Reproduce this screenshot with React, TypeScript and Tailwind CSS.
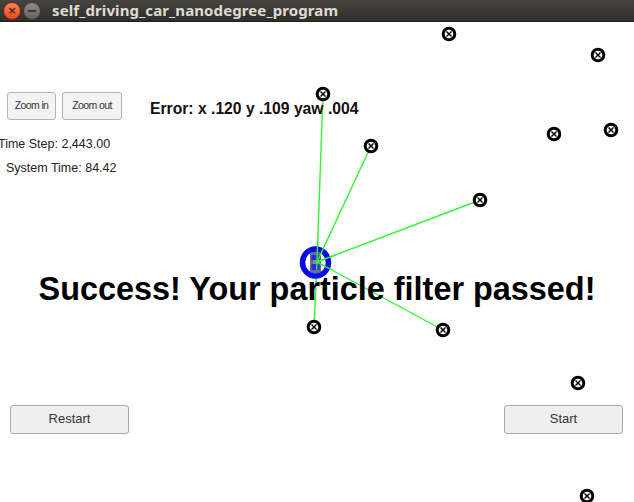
import React from "react";

const landmarks: [number, number][] = [
  [449, 34],
  [598, 55],
  [323, 94],
  [371, 146],
  [554, 134],
  [611, 130],
  [480, 200],
  [314, 327],
  [443, 330],
  [578, 383],
  [587, 496],
];

const linked: [number, number][] = [
  [323, 94],
  [371, 146],
  [480, 200],
  [314, 327],
  [443, 330],
];

const CAR: [number, number] = [317, 262];

function Marker({ x, y }: { x: number; y: number }) {
  return (
    <g>
      <circle cx={x} cy={y} r={5.8} fill="white" stroke="black" strokeWidth={3} />
      <line x1={x - 2.5} y1={y - 2.5} x2={x + 2.5} y2={y + 2.5} stroke="black" strokeWidth={1.4} />
      <line x1={x - 2.5} y1={y + 2.5} x2={x + 2.5} y2={y - 2.5} stroke="black" strokeWidth={1.4} />
    </g>
  );
}

export default function App() {
  const canvasTop = 22;
  return (
    <div className="w-[634px] h-[502px] overflow-hidden bg-white flex flex-col" style={{ fontFamily: '"Liberation Sans", Arial, sans-serif' }}>
      {/* Title bar */}
      <div className="h-[22px] shrink-0 flex items-center bg-gradient-to-b from-[#45443f] to-[#2f2e2b] border-b border-[#1e1e1c]">
        <div className="ml-[3px] w-[18px] h-[18px] rounded-full bg-gradient-to-b from-[#f6845a] to-[#e0491c] border border-[#7a2a10] flex items-center justify-center">
          <span className="text-[11px] leading-none text-[#5a1e08] font-bold" style={{ fontFamily: '"DejaVu Sans", sans-serif' }}>×</span>
        </div>
        <div className="ml-[2px] w-[18px] h-[18px] rounded-full bg-gradient-to-b from-[#8f8d88] to-[#64625d] border border-[#3a3935] flex items-center justify-center">
          <div className="w-[8px] h-[2px] bg-[#3b3a36]" />
        </div>
        <div className="ml-[11px] text-[15px] font-bold text-[#dfdbd2] tracking-[0.1px]" style={{ fontFamily: '"Noto Sans", "DejaVu Sans", sans-serif' }}>
          self_driving_car_nanodegree_program
        </div>
      </div>

      {/* Canvas */}
      <div className="relative flex-1 flex flex-col">
        <svg className="absolute inset-0" width={634} height={480} viewBox={`0 ${canvasTop} 634 480`}>
          {linked.map(([x, y], i) => (
            <line key={i} x1={CAR[0]} y1={CAR[1]} x2={x} y2={y} stroke="#33f533" strokeWidth={1.4} />
          ))}
          {/* car */}
          <ellipse cx={315.5} cy={262.5} rx={13} ry={13.5} fill="none" stroke="#0a0ae6" strokeWidth={5.5} />
          <rect x={310} y={252} width={11} height={21} rx={2} fill="#5c6a9c" />
          <rect x={311.5} y={255} width={8} height={5} fill="#2a2ad6" />
          <rect x={311.5} y={264} width={8} height={6} fill="#2a2ad6" />
          <rect x={313} y={260} width={5} height={4} fill="#8a8f98" />
          {linked.map(([x, y], i) => (
            <line key={"o" + i} x1={CAR[0]} y1={CAR[1]} x2={CAR[0] + (x - CAR[0]) * 0.12} y2={CAR[1] + (y - CAR[1]) * 0.12} stroke="#33f533" strokeWidth={1.4} />
          ))}
          {landmarks.map(([x, y], i) => (
            <Marker key={i} x={x} y={y} />
          ))}
        </svg>

        <div className="relative flex items-center pt-[70px] pl-[7px]">
          <button className="h-[28px] w-[49px] rounded-[3px] border border-[#b4b4b4] bg-[#f3f3f3] text-[10.5px] text-[#333] tracking-[-0.6px]">
            Zoom in
          </button>
          <button className="ml-[6px] h-[28px] w-[60px] rounded-[3px] border border-[#b4b4b4] bg-[#f3f3f3] text-[10.5px] text-[#333] tracking-[-0.6px]">
            Zoom out
          </button>
          <div className="ml-[28px] mt-[5px] text-[15.7px] font-bold text-[#111]">Error: x .120 y .109 yaw .004</div>
        </div>

        <div className="relative ml-[-2px] mt-[15px] text-[12.5px] text-[#222] leading-[16px]">Time Step: 2,443.00</div>
        <div className="relative ml-[6px] mt-[8px] text-[12.5px] text-[#222] leading-[16px]">System Time: 84.42</div>

        <div className="relative mt-[95px] text-center text-[32.4px] font-bold text-black leading-[36px]">
          Success! Your particle filter passed!
        </div>

        <div className="relative mt-[98px] flex justify-between px-[10px] pr-[11px]">
          <button className="h-[29px] w-[119px] rounded-[3px] border border-[#a8a8a8] bg-[#efefef] text-[13px] text-[#333]">
            Restart
          </button>
          <button className="h-[29px] w-[119px] rounded-[3px] border border-[#a8a8a8] bg-[#efefef] text-[13px] text-[#333]">
            Start
          </button>
        </div>
      </div>
    </div>
  );
}
